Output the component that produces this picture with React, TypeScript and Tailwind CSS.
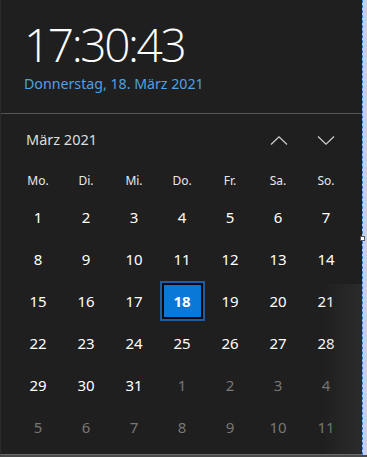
import React from "react";

const headers = ["Mo.", "Di.", "Mi.", "Do.", "Fr.", "Sa.", "So."];

// März 2021 starts on Monday; trailing days belong to April
const days: { n: number; dim: boolean }[] = [
  ...Array.from({ length: 31 }, (_, i) => ({ n: i + 1, dim: false })),
  ...Array.from({ length: 11 }, (_, i) => ({ n: i + 1, dim: true })),
];

function Chevron({ up }: { up?: boolean }) {
  return (
    <svg width="18" height="9" viewBox="0 0 18 9" className="block">
      <path
        d={up ? "M1 8.5 L9 0.8 L17 8.5" : "M1 0.5 L9 8.2 L17 0.5"}
        fill="none"
        stroke="#cfcfcf"
        strokeWidth="1.2"
      />
    </svg>
  );
}

export default function App() {
  return (
    <div
      className="w-[367px] h-[457px] bg-[#4a4a4a] flex flex-col overflow-hidden"
      style={{ fontFamily: '"Noto Sans", "Open Sans", sans-serif' }}
    >
      <div className="flex h-[455px]">
        <div className="relative w-[362px] h-full bg-[#1f1f1f] border-l border-[#2c2c2c] border-b border-b-[#6a6a6a] flex flex-col">
          {/* Uhrzeit */}
          <div className="pl-[23px] pt-[18px] h-[113px]">
            <div
              className="text-[46px] leading-[52px] font-light text-white tracking-[-2.4px]"
              style={{ fontFamily: '"Open Sans", "Noto Sans", sans-serif' }}
            >
              17:30:43
            </div>
            <div className="mt-[5px] text-[14.2px] leading-[18px] text-[#4ea1e3]">
              Donnerstag, 18. März 2021
            </div>
          </div>
          <div className="h-px bg-[#555555]" />

          {/* Kalender */}
          <div className="flex items-center justify-between h-[52px] pl-[25px] pr-[27px]">
            <div className="text-[14.5px] text-[#dedede]">März 2021</div>
            <div className="flex items-center gap-[29px]">
              <Chevron up />
              <Chevron />
            </div>
          </div>

          <div className="grid grid-cols-[repeat(7,48px)] pl-[13px]">
            {headers.map((h) => (
              <div key={h} className="h-[30px] flex items-center justify-center text-[12px] text-[#e8e8e8]">
                {h}
              </div>
            ))}
          </div>
          <div className="grid grid-cols-[repeat(7,48px)] auto-rows-[42px] pl-[13px]">
            {days.map((d, i) =>
              !d.dim && d.n === 18 ? (
                <div key={i} className="flex items-center justify-center">
                  <div className="w-[45px] h-[40px] border-2 border-[#1c5da3] bg-[#0a0a0a] p-[2px]">
                    <div className="w-full h-full bg-[#0a78d6] flex items-center justify-center text-[15px] font-bold text-white">
                      18
                    </div>
                  </div>
                </div>
              ) : (
                <div
                  key={i}
                  className={`flex items-center justify-center text-[15px] ${d.dim ? "text-[#777777]" : "text-white"}`}
                >
                  {d.n}
                </div>
              )
            )}
          </div>

          {/* leichter Schatten rechts unten */}
          <div className="pointer-events-none absolute right-0 bottom-0 w-[40px] h-[170px] bg-gradient-to-r from-transparent to-[#3a3a3a]/45" />
        </div>
        <div className="relative w-[5px] h-full bg-[#c3d3ea] border-l border-dashed border-[#3d7fd0]">
          <div className="absolute left-[-3px] top-[236px] w-[5px] h-[5px] bg-white border border-[#555]" />
        </div>
      </div>
    </div>
  );
}
